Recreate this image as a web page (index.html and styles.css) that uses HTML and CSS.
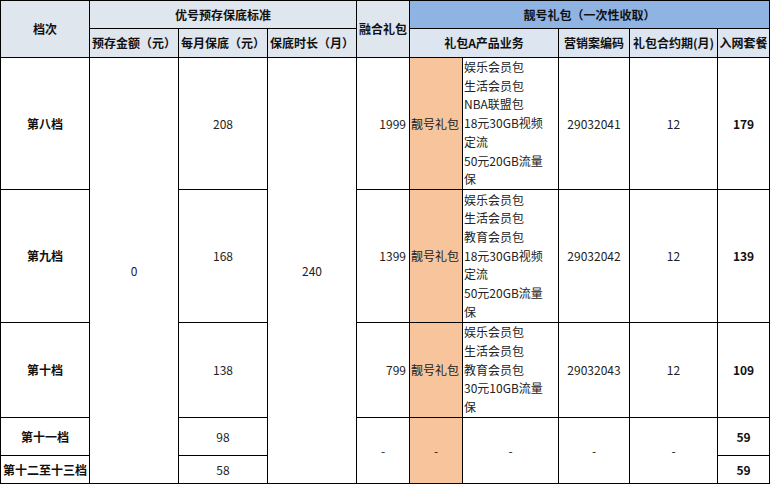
FILE: index.html
```html
<!DOCTYPE html>
<html lang="zh-CN">
<head>
<meta charset="utf-8">
<title>靓号礼包</title>
<link rel="stylesheet" href="styles.css">
</head>
<body>
<div class="grid">
  <div class="cell th hg rs2">档次</div>
  <div class="cell th hg cs3">优号预存保底标准</div>
  <div class="cell th hg rs2">融合礼包</div>
  <div class="cell th hb cs5">靓号礼包（一次性收取）</div>

  <div class="cell th hg">预存金额（元）</div>
  <div class="cell th hg">每月保底（元）</div>
  <div class="cell th hg">保底时长（月）</div>
  <div class="cell th hl cs2">礼包A产品业务</div>
  <div class="cell th hl">营销案编码</div>
  <div class="cell th hl">礼包合约期(月)</div>
  <div class="cell th hl">入网套餐</div>

  <div class="cell bold">第八档</div>
  <div class="cell rs5">0</div>
  <div class="cell">208</div>
  <div class="cell rs5">240</div>
  <div class="cell right">1999</div>
  <div class="cell orange left">靓号礼包</div>
  <div class="cell list">娱乐会员包<br>生活会员包<br>NBA联盟包<br>18元30GB视频<br>定流<br>50元20GB流量<br>保</div>
  <div class="cell">29032041</div>
  <div class="cell">12</div>
  <div class="cell bold">179</div>

  <div class="cell bold">第九档</div>
  <div class="cell">168</div>
  <div class="cell right">1399</div>
  <div class="cell orange left">靓号礼包</div>
  <div class="cell list">娱乐会员包<br>生活会员包<br>教育会员包<br>18元30GB视频<br>定流<br>50元20GB流量<br>保</div>
  <div class="cell">29032042</div>
  <div class="cell">12</div>
  <div class="cell bold">139</div>

  <div class="cell bold">第十档</div>
  <div class="cell">138</div>
  <div class="cell right">799</div>
  <div class="cell orange left">靓号礼包</div>
  <div class="cell list">娱乐会员包<br>生活会员包<br>教育会员包<br>30元10GB流量<br>保</div>
  <div class="cell">29032043</div>
  <div class="cell">12</div>
  <div class="cell bold">109</div>

  <div class="cell bold">第十一档</div>
  <div class="cell">98</div>
  <div class="cell rs2">-</div>
  <div class="cell orange rs2">-</div>
  <div class="cell rs2">-</div>
  <div class="cell rs2">-</div>
  <div class="cell rs2">-</div>
  <div class="cell bold">59</div>

  <div class="cell bold">第十二至十三档</div>
  <div class="cell">58</div>
  <div class="cell bold">59</div>
</div>
</body>
</html>
```
FILE: styles.css
```css
html, body {
  margin: 0;
  padding: 0;
  background: #ffffff;
}
body {
  font-family: "Noto Sans CJK SC", "Noto Sans", sans-serif;
  font-size: 12px;
  color: #222;
}
.grid {
  display: grid;
  width: 770px;
  box-sizing: border-box;
  border: 1px solid #000;
  background: #000;
  gap: 1px;
  grid-template-columns: 88px 88px 88px 88px 52px 52px 95px 70px 87px 51px;
  grid-template-rows: 27px 28px 131px 132px 94px 37px 27px;
}
.cell {
  background: #fff;
  display: flex;
  align-items: center;
  justify-content: center;
  text-align: center;
  white-space: nowrap;
  overflow: hidden;
  line-height: 18px;
}
.th {
  font-weight: bold;
  color: #111;
}
.hg { background: #e0e6ee; }
.hb { background: #8fb4e3; }
.hl { background: #dde6f0; }

.rs2 { grid-row: span 2; }
.rs5 { grid-row: span 5; }
.cs2 { grid-column: span 2; }
.cs3 { grid-column: span 3; }
.cs5 { grid-column: span 5; }

.bold { font-weight: bold; color: #111; }
.right { justify-content: flex-end; padding-right: 3px; }
.left { justify-content: flex-start; padding-left: 1px; }
.orange { background: #f8c49b; }
.list {
  display: block;
  align-self: center;
  text-align: left;
  white-space: normal;
  padding-left: 1px;
  line-height: 18.7px;
  background: #fff;
  height: auto;
}
.grid > .list { align-self: stretch; display: flex; flex-direction: column; justify-content: center; align-items: flex-start; }
```
